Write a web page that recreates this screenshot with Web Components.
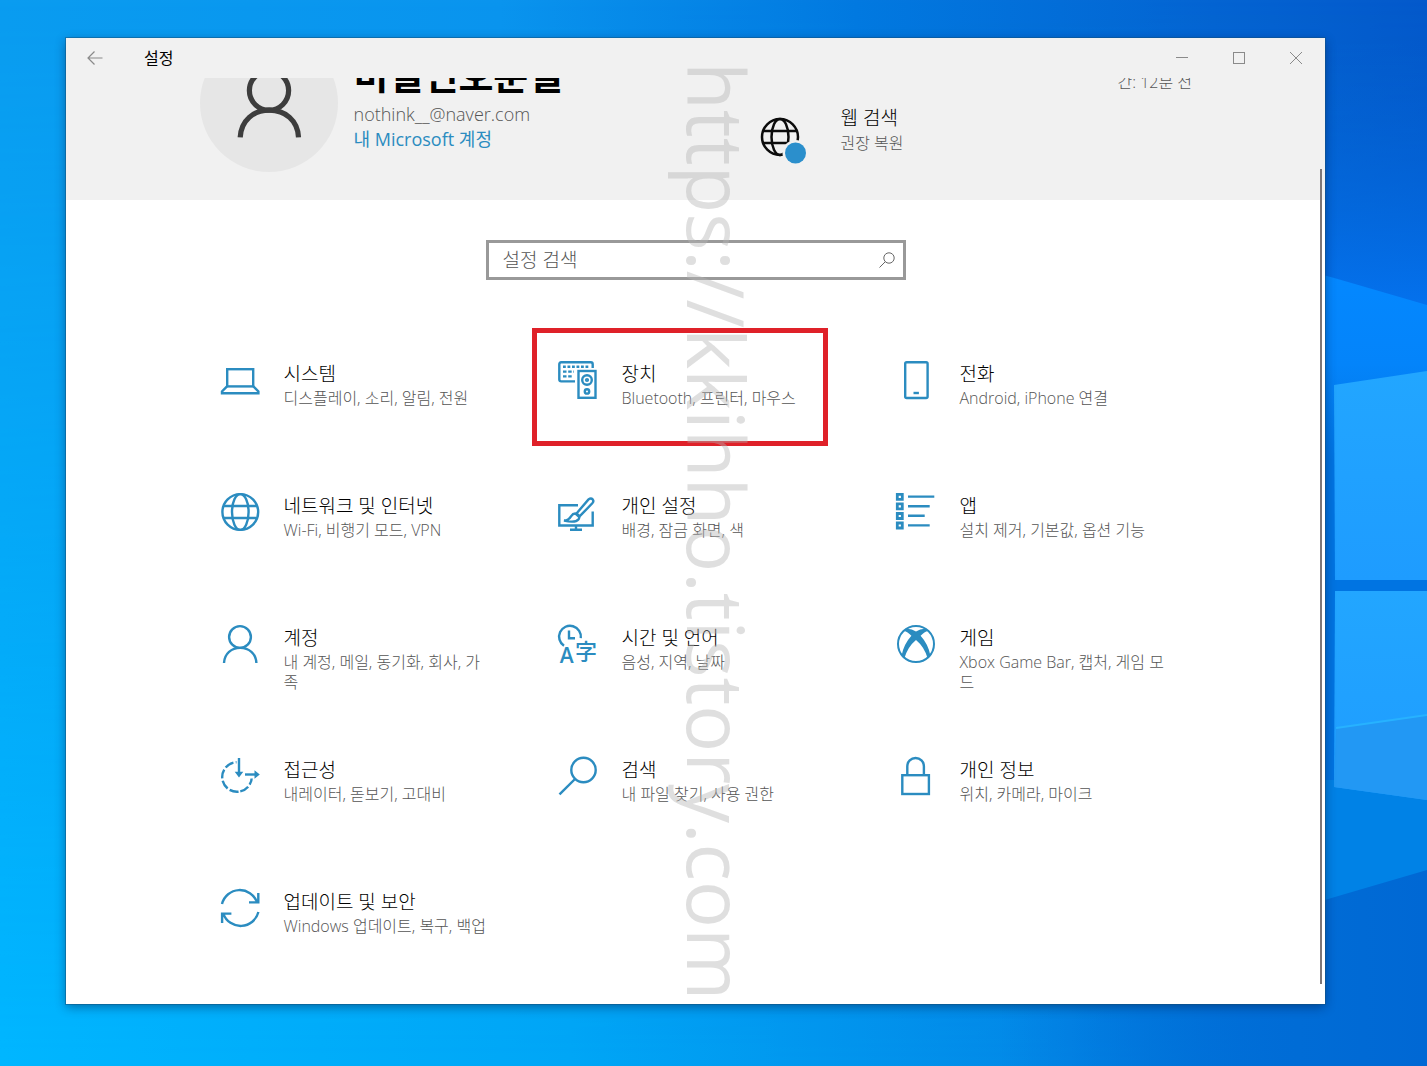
<!DOCTYPE html>
<html lang="ko">
<head>
<meta charset="utf-8">
<title>설정</title>
<style>
  html, body { height: 100%; margin: 0; }
  body {
    --accent: #2b8cc0;
    --text: #000;
    --muted: #555;
    --chrome: #f1f1f1;
    font-family: "Open Sans", "Noto Sans CJK KR", sans-serif;
    font-size: 16px;
    color: var(--text);
    overflow: hidden;
  }
</style>
</head>
<body>
<desktop-screen>
  <settings-window>
    <window-titlebar slot="titlebar" label="설정"></window-titlebar>
    <account-banner slot="banner"></account-banner>
    <settings-search></settings-search>
    <category-grid>
      <category-tile icon="system" label="시스템">디스플레이, 소리, 알림, 전원</category-tile>
      <category-tile icon="devices" label="장치" highlighted>Bluetooth, 프린터, 마우스</category-tile>
      <category-tile icon="phone" label="전화">Android, iPhone 연결</category-tile>
      <category-tile icon="network" label="네트워크 및 인터넷">Wi-Fi, 비행기 모드, VPN</category-tile>
      <category-tile icon="personal" label="개인 설정">배경, 잠금 화면, 색</category-tile>
      <category-tile icon="apps" label="앱">설치 제거, 기본값, 옵션 기능</category-tile>
      <category-tile icon="accounts" label="계정">내 계정, 메일, 동기화, 회사, 가족</category-tile>
      <category-tile icon="time" label="시간 및 언어">음성, 지역, 날짜</category-tile>
      <category-tile icon="gaming" label="게임">Xbox Game Bar, 캡처, 게임 모드</category-tile>
      <category-tile icon="ease" label="접근성">내레이터, 돋보기, 고대비</category-tile>
      <category-tile icon="search" label="검색">내 파일 찾기, 사용 권한</category-tile>
      <category-tile icon="privacy" label="개인 정보">위치, 카메라, 마이크</category-tile>
      <category-tile icon="update" label="업데이트 및 보안">Windows 업데이트, 복구, 백업</category-tile>
    </category-grid>
  </settings-window>
  <page-watermark slot="overlay">https://kkihho.tistory.com</page-watermark>
</desktop-screen>

<script>
const define = (name, html, setup, observed = []) => {
  const template = document.createElement('template');
  template.innerHTML = html;
  customElements.define(name, class extends HTMLElement {
    static get observedAttributes() { return observed; }
    constructor() {
      super();
      this.attachShadow({ mode: 'open' }).append(template.content.cloneNode(true));
    }
    connectedCallback() { if (setup) setup(this, this.shadowRoot); }
    attributeChangedCallback() { if (setup) setup(this, this.shadowRoot); }
  });
};

/* Outline icons on a 40 x 40 grid */
const PERSON = `<circle cx="20" cy="12" r="10.9"/><path d="M4 38C4.5 28.5 11.5 22.9 20.2 22.9S36 28.5 36.4 38"/>`;
const ICONS = {
  system: `<rect x="7.2" y="8.2" width="26" height="17.2"/><path d="M7 25.4 2 30.5v1.7h36.4v-1.7L33.4 25.4"/>`,
  devices: `<path d="M17 20.4H3.2Q1.3 20.4 1.3 18.5V3.2Q1.3 1.3 3.2 1.3H32.8Q34.7 1.3 34.7 3.2V7"/>
    <path d="M5 5.8H32" stroke-dasharray="2.8 1.7"/><path d="M5 10.6H16M5 15.4H15" stroke-dasharray="3.5 1.7"/>
    <rect x="20.5" y="10" width="17" height="26.8"/><circle cx="29" cy="19" r="4.8"/><circle cx="29" cy="19" r=".9"/><circle cx="29" cy="30.4" r="2.2"/>`,
  phone: `<rect x="9.2" y="1.2" width="22.4" height="35.8" rx="1.5"/><path d="M17.5 32h5.4"/>`,
  network: `<circle cx="20.3" cy="19" r="17.9"/><ellipse cx="20.3" cy="19" rx="8.3" ry="17.9"/><path d="M4 13H36.6M4 25H36.6"/>`,
  personal: `<path d="M20 12.3H1.3V32.5H34.7V18.5M18 32.5V36.8M12 36.8H24"/>
    <path d="M18.5 20.5 30.5 6.4Q33 4.5 34.7 6.4 36.2 8.2 34.3 10.3L21.8 23.2"/>
    <path d="M6 27.5Q10.5 27.5 13 23.3 15.5 19.6 18.8 20.8 22.8 23 20.6 26.2 17.5 30.2 6 27.5Z"/><path d="M17.5 20.5 22 24.5"/>`,
  apps: `<g transform="translate(-1 0)"><path d="M2.3 1.3h5v5h-5zM2.3 10.9h5v5h-5zM2.3 20.5h5v5h-5zM2.3 30h5v5h-5z" stroke-width="2.8"/>
    <path d="M13 3.6H39.3M13 13.3H34.7M13 22.8H29.7M13 32.4H34.7"/></g>`,
  accounts: PERSON,
  user: PERSON,
  time: `<path d="M6 20.8A10.9 10.9 0 1 1 22.8 13.2"/><path d="M11 5.5V13.3H17"/>
    <text x="1.8" y="38" font-family="Open Sans, sans-serif" font-size="21" font-weight="600" fill="var(--accent)" stroke="none">A</text>
    <text x="17" y="34" font-family="Noto Sans CJK KR, sans-serif" font-size="22" font-weight="500" fill="var(--accent)" stroke="none">字</text>`,
  gaming: `<circle cx="20" cy="19" r="18" stroke-width="2"/>
    <path d="M9.5 3.8Q15 3 20 6.6 25 3 30.5 3.8L32 6Q28.5 6.6 24.6 10.8 32.5 19.5 34.5 31L31.8 33.8Q28.5 22 20 15 11.500 22 8.200 33.800L5.500 31Q7.500 19.500 15.400 10.800 11.500 6.600 8 6Z" fill="var(--accent)" stroke="none"/>`,
  ease: `<circle cx="17" cy="20" r="14.8" stroke-dasharray="9.2 2.424" transform="rotate(84 17 20)"/>
    <path d="M16.5 2H35V21.5H16.5Z" fill="#fff" stroke="none"/>
    <path d="M19 1V17"/><path d="M25 17.5H36"/><path d="M14.7 14.8H23.3L19 20.5ZM34.5 13.2V21.8L39.8 17.5Z" fill="var(--accent)" stroke="none"/>`,
  search: `<circle cx="25.5" cy="13" r="12.2"/><path d="M17 22 1.5 37.4"/>`,
  privacy: `<rect x="6.3" y="18.2" width="26.6" height="18.8"/><path d="M11.3 18V9.3A8.3 8.3 0 0 1 27.9 9.3V18"/>`,
  update: `<path d="M2 15A18.3 18.3 0 0 1 37 13.2M38.3 4V13.4H29M38.4 23A18.3 18.3 0 0 1 3.4 24.8M2.1 34V24.6H11.4"/>`
};

define('line-icon', `
  <style>
    :host { display: block; width: 40px; height: 40px; }
    svg { display: block; width: 100%; height: 100%; overflow: visible; fill: none; stroke: var(--icon-color, var(--accent)); stroke-width: var(--icon-stroke, 2.4); }
  </style>
  <svg viewBox="0 0 40 40" aria-hidden="true"></svg>`,
  (el, root) => { root.querySelector('svg').innerHTML = ICONS[el.getAttribute('name')] || ''; },
  ['name']);

define('desktop-screen', `
  <style>
    :host { display: grid; box-sizing: border-box; min-height: 100vh; padding: 38px 102px 62px 66px; position: relative; overflow: hidden; }
    .wallpaper { position: absolute; inset: 0; width: 100%; height: 100%; }
  </style>
  <svg class="wallpaper" viewBox="0 0 1427 1066" preserveAspectRatio="none" aria-hidden="true">
    <defs>
      <linearGradient id="top" x1="0" x2="1" y1="0" y2="0">
        <stop offset="0" stop-color="#0a9cf0"/><stop offset=".35" stop-color="#0a94ee"/><stop offset=".6" stop-color="#0279e0"/><stop offset=".85" stop-color="#0464d2"/><stop offset="1" stop-color="#0459cb"/>
      </linearGradient>
      <linearGradient id="bottom" x1="0" x2="1" y1="0" y2="0">
        <stop offset="0" stop-color="#00b6ff"/><stop offset=".4" stop-color="#00a6f6"/><stop offset=".75" stop-color="#0287e6"/><stop offset=".92" stop-color="#0070d8"/><stop offset="1" stop-color="#0066d2"/>
      </linearGradient>
      <linearGradient id="fade" x1="0" x2="0" y1="0" y2="1">
        <stop offset="0" stop-color="#fff" stop-opacity="0"/><stop offset="1" stop-color="#fff"/>
      </linearGradient>
      <mask id="lower"><rect width="1427" height="1066" fill="url(#fade)"/></mask>
      <linearGradient id="beam" x1="0" x2="0" y1="0" y2="1">
        <stop offset="0" stop-color="#0488ff"/><stop offset=".5" stop-color="#0484fa"/><stop offset="1" stop-color="#0074e2"/>
      </linearGradient>
      <linearGradient id="pane" x1="0" x2="0" y1="0" y2="1">
        <stop offset="0" stop-color="#22a6ff"/><stop offset="1" stop-color="#1e9cff"/>
      </linearGradient>
      <linearGradient id="right" x1="0" x2="0" y1="0" y2="1">
        <stop offset="0" stop-color="#0262d2" stop-opacity="0"/><stop offset="1" stop-color="#0472ee"/>
      </linearGradient>
      <linearGradient id="floor" x1="0" x2="1" y1="0" y2="0">
        <stop offset="0" stop-color="#006cd6" stop-opacity="0"/><stop offset=".7" stop-color="#006cd6"/><stop offset="1" stop-color="#0068d4"/>
      </linearGradient>
    </defs>
    <rect width="1427" height="1066" fill="url(#top)"/>
    <rect width="1427" height="1066" fill="url(#bottom)" mask="url(#lower)"/>
    <path d="M1310 40H1427V310L1310 270Z" fill="url(#right)"/>
    <path d="M1300 268 1427 305V460H1300Z" fill="url(#beam)"/>
    <path d="M1300 459H1427V800H1300Z" fill="#0074e2"/>
    <path d="M1300 780H1427V871L1300 908Z" fill="#0082e6"/>
    <path d="M1000 995 1427 870V1066H1000Z" fill="url(#floor)"/>
    <path d="M1334 385 1427 371V580H1335Z" fill="url(#pane)"/>
    <path d="M1335 591H1427V800L1334 787Z" fill="url(#pane)"/>
    <path d="M1336 728 1427 715V800L1334 787Z" fill="#2298f4"/>
    <path d="M1336 728 1427 715" stroke="#27b2ff" stroke-width="2"/>
  </svg>
  <slot></slot>
  <slot name="overlay"></slot>`);

define('settings-window', `
  <style>
    :host { display: flex; flex-direction: column; position: relative; background: #fff; box-shadow: 0 0 0 1px rgba(20, 80, 120, .45), 0 3px 10px rgba(0, 20, 60, .45); }
    main { display: flex; flex-direction: column; gap: 48px; padding-top: 40px; }
    .scrollbar { position: absolute; right: 3px; top: 131px; bottom: 20px; width: 2px; background: #7b7679; }
  </style>
  <slot name="titlebar"></slot>
  <slot name="banner"></slot>
  <main><slot></slot></main>
  <div class="scrollbar"></div>`);

define('window-titlebar', `
  <style>
    :host { display: flex; align-items: stretch; height: 40px; background: var(--chrome); }
    button { display: grid; place-items: center; width: 57px; padding: 0; border: 0; background: none; }
    svg { width: 16px; height: 16px; fill: none; stroke: #8a8a8a; }
    h1 { flex: 1; margin: 0; padding-left: 21px; font-size: 16px; font-weight: 400; line-height: 40px; }
  </style>
  <button aria-label="뒤로"><svg viewBox="0 0 16 16"><path d="M15.5 8H1M7.5 1.5 1 8l6.5 6.5" stroke-width="1.2"/></svg></button>
  <h1></h1>
  <button aria-label="최소화"><svg viewBox="0 0 16 16"><path d="M1 7.5h12"/></svg></button>
  <button aria-label="최대화"><svg viewBox="0 0 16 16"><rect x="1.5" y="2.5" width="11" height="11"/></svg></button>
  <button aria-label="닫기"><svg viewBox="0 0 16 16"><path d="M1 2l12 12M13 2 1 14"/></svg></button>`,
  (el, root) => { root.querySelector('h1').textContent = el.getAttribute('label'); });

define('account-banner', `
  <style>
    :host { display: block; height: 122px; overflow: hidden; background: var(--chrome); font-weight: 300; }
    .row { display: flex; align-items: flex-end; box-sizing: border-box; height: 100%; max-width: 1014px; margin: 0 auto; padding: 0 0 28px 11px; }
    .avatar { flex: none; display: grid; place-items: center; box-sizing: border-box; width: 138px; height: 138px; padding-top: 4px; border-radius: 50%; background: #e6e6e6; --icon-color: #3d3d3d; --icon-stroke: 2.9; }
    .avatar line-icon { width: 72px; height: 72px; }
    .account { width: 407px; padding: 0 0 19px 16px; white-space: nowrap; }
    .name { margin: 0 0 4px; font-size: 38px; font-weight: 700; line-height: 48px; }
    p { margin: 0; line-height: 25px; }
    .mail { font-size: 18px; color: var(--muted); }
    a { font-size: 18px; font-weight: 400; color: var(--accent); text-decoration: none; }
    .web { display: flex; align-items: flex-end; gap: 34px; padding-bottom: 9px; width: 357px; }
    .web svg { width: 46px; height: 46px; overflow: visible; }
    .web div { padding-bottom: 7px; }
    .title { font-size: 19px; }
    .status { color: var(--muted); }
    .update { padding-bottom: 77px; white-space: nowrap; }
  </style>
  <div class="row">
    <div class="avatar"><line-icon name="user"></line-icon></div>
    <div class="account">
      <h2 class="name">비밀번호분실</h2>
      <p class="mail">nothink__@naver.com</p>
      <p><a href="#account">내 Microsoft 계정</a></p>
    </div>
    <div class="web">
      <svg viewBox="0 0 46 46" aria-hidden="true">
        <g fill="none" stroke="#0c0c0c" stroke-width="2.5"><circle cx="19" cy="20" r="18"/><ellipse cx="19" cy="20" rx="8.5" ry="18"/><path d="M2.500 14H35.500M2.500 26H35.500"/></g>
        <circle cx="34.5" cy="36" r="13" fill="#f1f1f1"/><circle cx="34.5" cy="36" r="10.5" fill="#2b8fcc"/>
      </svg>
      <div><p class="title">웹 검색</p><p class="status">권장 복원</p></div>
    </div>
    <p class="status update">간: 12분 전</p>
  </div>`);

define('settings-search', `
  <style>
    :host { display: flex; align-items: center; align-self: center; box-sizing: border-box; width: 420px; height: 40px; padding: 0 8px 0 14px; border: 3px solid #999; background: #fff; }
    input { flex: 1; min-width: 0; padding: 0; border: 0; outline: 0; background: none; font: inherit; font-size: 19px; font-weight: 300; color: var(--text); }
    input::placeholder { color: var(--muted); opacity: 1; }
    svg { width: 16px; height: 16px; fill: none; stroke: #666; }
  </style>
  <input type="text" placeholder="설정 검색" aria-label="설정 검색">
  <svg viewBox="0 0 16 16" aria-hidden="true"><circle cx="10" cy="6" r="5.2"/><path d="M6.3 9.7.5 15.5"/></svg>`);

define('category-grid', `
  <style>
    :host { display: grid; grid-template-columns: repeat(3, 1fr); grid-auto-rows: 132px; width: 100%; max-width: 1014px; margin: 0 auto; font-weight: 300; }
  </style>
  <slot></slot>`);

define('category-tile', `
  <style>
    :host { display: block; position: relative; }
    a { display: flex; gap: 24px; padding: 33px 31px 0; color: inherit; text-decoration: none; }
    line-icon { flex: none; }
    .text { width: 210px; word-break: break-all; }
    h2 { margin: 0; font-size: 19px; font-weight: inherit; line-height: 26px; }
    p { margin: 0; padding-top: 1px; line-height: 20px; color: var(--muted); }
    :host([highlighted])::after { content: ""; position: absolute; inset: 0 37px 14px 5px; border: 5px solid #df2129; pointer-events: none; }
  </style>
  <a href="#"><line-icon></line-icon><div class="text"><h2></h2><p><slot></slot></p></div></a>`,
  (el, root) => {
    root.querySelector('h2').textContent = el.getAttribute('label');
    root.querySelector('a').href = '#' + el.getAttribute('icon');
    root.querySelector('line-icon').setAttribute('name', el.getAttribute('icon'));
  });

define('page-watermark', `
  <style>
    :host { position: absolute; left: 663px; top: 62px; writing-mode: vertical-rl; font-size: 78px; line-height: 108px; white-space: nowrap; color: rgba(180, 180, 180, .43); pointer-events: none; }
  </style>
  <slot></slot>`);
</script>
</body>
</html>
